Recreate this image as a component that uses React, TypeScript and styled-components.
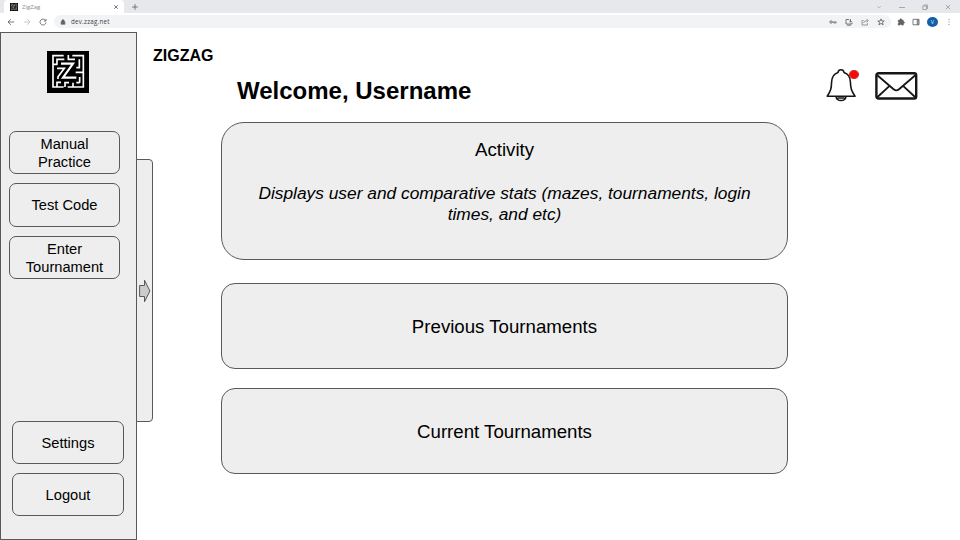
import React from "react";
import styled, { createGlobalStyle } from "styled-components";

const Global = createGlobalStyle`
  * { box-sizing: border-box; }
  body { margin: 0; background: #fff; color: #000; font-family: "Liberation Sans", Arial, sans-serif; overflow: hidden; }
  svg { display: block; flex: none; }
`;

const Page = styled.div`
  width: 960px;
  height: 540px;
  display: flex;
  flex-direction: column;
`;

const TabStrip = styled.div`
  height: 13px;
  flex: none;
  display: flex;
  align-items: flex-end;
  justify-content: space-between;
  background: #e7e8ec;
`;

const TabGroup = styled.div`
  display: flex;
  align-items: center;
  height: 13px;
`;

const Tab = styled.div`
  display: flex;
  align-items: center;
  width: 120px;
  height: 13px;
  margin-left: 4px;
  padding: 0 4px 0 6px;
  background: #fff;
  border-radius: 4px 4px 0 0;
`;

const TabTitle = styled.span`
  flex: 1;
  margin-left: 4px;
  font: 6px/8px "Open Sans", sans-serif;
  color: #85888c;
`;

const NewTab = styled.div`
  margin-left: 7px;
`;

const WindowControls = styled.div`
  display: flex;
  align-items: center;
  height: 12px;
  gap: 15px;
  padding-right: 8px;
`;

const Toolbar = styled.div`
  height: 19px;
  flex: none;
  display: flex;
  padding: 2px 7px 4px;
  align-items: center;
  background: #fff;
`;

const NavButtons = styled.div`
  display: flex;
  gap: 8px;
  width: 47px;
`;

const AddressBar = styled.div`
  flex: 1;
  height: 13px;
  display: flex;
  align-items: center;
  padding: 0 6px;
  border-radius: 7px;
  background: #f1f3f4;
`;

const Url = styled.span`
  flex: 1;
  margin-left: 5px;
  font: 6.2px/10px "Open Sans", sans-serif;
  letter-spacing: 0.25px;
  color: #3d4043;
`;

const ActionIcons = styled.div`
  display: flex;
  align-items: center;
  gap: 8px;
`;

const Extensions = styled(ActionIcons)`
  margin-left: 6px;
  gap: 7px;
`;

const Avatar = styled.span`
  width: 11px;
  height: 10px;
  border-radius: 50%;
  background: #1260a8;
  color: #dbe8f5;
  font-size: 5px;
  line-height: 10px;
  text-align: center;
`;

const Body = styled.div`
  flex: 1;
  display: flex;
  min-height: 0;
`;

const Sidebar = styled.nav`
  width: 137px;
  flex: none;
  display: flex;
  flex-direction: column;
  align-items: flex-start;
  padding: 18px 0 23px 8px;
  background: #eee;
  border: 1px solid #595959;
`;

const LogoSlot = styled.div`
  margin: 0 0 38px 38px;
`;

const ButtonGroup = styled.div<{ $bottom?: boolean }>`
  display: flex;
  flex-direction: column;
  gap: 9px;
  margin-top: ${(p) => (p.$bottom ? "auto" : "0")};
  margin-left: ${(p) => (p.$bottom ? "3px" : "0")};
`;

const SideButton = styled.button<{ $wide?: boolean; $tall?: boolean }>`
  width: ${(p) => (p.$wide ? 112 : 111)}px;
  height: ${(p) => (p.$tall ? 44 : 43)}px;
  padding: 0 10px;
  border: 1px solid #595959;
  border-radius: 7px;
  background: #eee;
  color: #000;
  font: 14.67px/18px "Liberation Sans", Arial, sans-serif;
`;

const Drawer = styled.div`
  width: 17px;
  height: 263px;
  flex: none;
  margin: 127px 0 0 -1px;
  display: flex;
  align-items: center;
  padding-left: 2px;
  border: 1px solid #595959;
  border-radius: 0 4px 4px 0;
  background: #eee;
`;

const Main = styled.main`
  flex: 1;
  display: flex;
  flex-direction: column;
  padding-top: 14px;
`;

const Brand = styled.div`
  height: 20px;
  font: bold 16px/20px "Liberation Sans", Arial, sans-serif;
`;

const Header = styled.header`
  display: flex;
  align-items: flex-start;
  height: 56px;
  padding-left: 84px;
`;

const Title = styled.h1`
  flex: 1;
  margin: 11px 0 0;
  font: bold 24px/28px "Liberation Sans", Arial, sans-serif;
`;

const BellButton = styled.div`
  position: relative;
  margin: 2px 17px 0 0;
`;

const Badge = styled.span`
  position: absolute;
  top: 2px;
  right: -1px;
  width: 10px;
  height: 9px;
  border-radius: 50%;
  background: #fb0707;
  border: 1px solid #c43030;
`;

const MailButton = styled.div`
  margin: 6px 42px 0 0;
`;

const Cards = styled.div`
  width: 567px;
  margin-left: 68px;
  display: flex;
  flex-direction: column;
`;

const Card = styled.section<{ $height: number; $radius: number; $gap: number }>`
  height: ${(p) => p.$height}px;
  margin-bottom: ${(p) => p.$gap}px;
  border: 1px solid #595959;
  border-radius: ${(p) => p.$radius}px;
  background: #eee;
  display: flex;
  flex-direction: column;
  align-items: center;
  justify-content: center;
  text-align: center;
`;

const CardTitle = styled.h2<{ $lowered?: boolean }>`
  margin: 0;
  padding-top: ${(p) => (p.$lowered ? 2 : 0)}px;
  font: 18.67px/22px "Liberation Sans", Arial, sans-serif;
`;

const CardText = styled.p`
  margin: 22px 0 19px;
  width: 500px;
  font: italic 17.33px/21px "Liberation Sans", Arial, sans-serif;
`;

const MazeLogo = ({ size }: { size: number }) => (
  <svg width={size} height={size} viewBox="0 0 126 126">
    <rect width="126" height="126" fill="#000" />
    <g fill="none" stroke="#fff" strokeWidth="5">
      <path d="M50 14H18V108H50" />
      <path d="M62 108H109V14H76" />
      <path d="M64 12V25H84M97 25V50H88" />
      <path d="M30 38V25H52M18 40H32" />
      <path d="M30 108V94H42M54 108V95H66M78 108V95" />
      <path d="M98 95V78M109 64H86M98 95H88" />
      <path d="M42 38H78L48 80H88" strokeWidth="6.5" />
      <path d="M30 52H52L33 77V84" />
    </g>
  </svg>
);

const Bell = () => (
  <svg width="32" height="34" viewBox="0 0 32 34" fill="none" stroke="#161616" strokeWidth="1.6" strokeLinejoin="round">
    <path d="M12 4.5C12.5 .8 17.5 .8 18 4.5C22.8 6 24.3 9.5 24.4 14C24.6 20.5 25.4 23 29 28.3H1.2C4.8 23 5.4 20.5 5.6 14C5.8 9.5 7.2 6 12 4.5Z" />
    <path d="M10 28.5C10.7 33.9 19.3 33.9 20 28.5M11.5 30H18.5" />
  </svg>
);

const Envelope = () => (
  <svg width="43" height="28" viewBox="0 0 43 28" fill="none" stroke="#161616" strokeWidth="2.4" strokeLinejoin="round">
    <rect x="1.4" y="1.3" width="39.8" height="25.2" rx="2" />
    <path d="M2 3L18.6 17.2Q21.3 19.5 24 17.2L40.6 3M2 25.5L14.8 13.7M40.6 25.5L27.8 13.7" strokeWidth="1.8" />
  </svg>
);

const Arrow = () => (
  <svg width="12" height="24" viewBox="0 0 12 24">
    <path d="M.6 6.5H5.5V1.2L10.9 12L5.5 22.8V17.5H.6Z" fill="#ccc" stroke="#595959" />
  </svg>
);

const Glyph = ({ d, size = 8, color = "#5f6368", fill = "none" }: { d: string; size?: number; color?: string; fill?: string }) => (
  <svg width={size} height={size} viewBox="0 0 8 8" fill={fill} stroke={color} strokeWidth=".85">
    <path d={d} />
  </svg>
);

export default function App() {
  return (
    <>
      <Global />
      <Page>
        <TabStrip>
          <TabGroup>
            <Tab>
              <MazeLogo size={8} />
              <TabTitle>ZigZag</TabTitle>
              <Glyph size={8} d="M2.2 2.2L5.8 5.8M5.8 2.2L2.2 5.8" />
            </Tab>
            <NewTab>
              <Glyph color="#606368" d="M4 1.2V6.8M1.2 4H6.8" />
            </NewTab>
          </TabGroup>
          <WindowControls>
            <Glyph color="#b5b6bb" d="M2 3L4 5L6 3" />
            <Glyph color="#999ba0" d="M1 4.5H7" />
            <Glyph color="#999ba0" d="M1.8 3H5.5V6.5H1.8ZM3 3V2H6.5V5.5H5.5" />
            <Glyph color="#999ba0" d="M1.8 2L6.2 6.2M6.2 2L1.8 6.2" />
          </WindowControls>
        </TabStrip>
        <Toolbar>
          <NavButtons>
            <Glyph d="M7.2 4H1M3.8 1.2L1 4L3.8 6.8" />
            <Glyph color="#bfc1c4" d="M.8 4H7M4.2 1.2L7 4L4.2 6.8" />
            <Glyph d="M6.6 2.5A3 3 0 1 0 7 4.5M7 1V3H4.8" />
          </NavButtons>
          <AddressBar>
            <Glyph size={6} fill="#5f6368" d="M1.5 3.5H6.5V7H1.5ZM2.5 3.5V2.2C2.5 .5 5.5 .5 5.5 2.2V3.5" />
            <Url>dev.zzag.net</Url>
            <ActionIcons>
              <Glyph d="M3.2 4A1.2 1.2 0 1 0 .8 4A1.2 1.2 0 1 0 3.2 4H7.5M5.2 4V5.5M6.8 4V5.5" />
              <Glyph d="M4 1.5H1V6H7V4.5M2 7.2H6M5.5 1V4M4.3 3L5.5 4.2L6.7 3" />
              <Glyph color="#85888c" d="M2.5 2.5H1V7H6.5V5.2M2.5 5C3 3.3 4.3 2.7 6.8 2.7M5.5 1L7.2 2.7L5.5 4.4" />
              <Glyph d="M4 .9L4.9 3H7.2L5.4 4.4L6.1 6.8L4 5.4L1.9 6.8L2.6 4.4L.8 3H3.1Z" />
            </ActionIcons>
          </AddressBar>
          <Extensions>
            <Glyph fill="#5f6368" d="M1.3 2.3H3V1.5C3 .6 4.7 .6 4.7 1.5V2.3H6.2V4H6.8C7.6 4 7.6 5.3 6.8 5.3H6.2V7H4.7C4.7 5.6 3 5.6 3 7H1.3V5.3C2.6 5.3 2.6 3.8 1.3 3.8Z" />
            <Glyph d="M1 1.3H7V6.8H1ZM5.2 1.3V6.8M6.1 1.3V6.8" />
            <Avatar>V</Avatar>
            <Glyph d="M4 1.2V2.1M4 3.6V4.5M4 6V6.9" />
          </Extensions>
        </Toolbar>
        <Body>
          <Sidebar>
            <LogoSlot>
              <MazeLogo size={42} />
            </LogoSlot>
            <ButtonGroup>
              <SideButton>Manual Practice</SideButton>
              <SideButton $tall>Test Code</SideButton>
              <SideButton>Enter Tournament</SideButton>
            </ButtonGroup>
            <ButtonGroup $bottom>
              <SideButton $wide>Settings</SideButton>
              <SideButton $wide>Logout</SideButton>
            </ButtonGroup>
          </Sidebar>
          <Drawer>
            <Arrow />
          </Drawer>
          <Main>
            <Brand>ZIGZAG</Brand>
            <Header>
              <Title>Welcome, Username</Title>
              <BellButton>
                <Bell />
                <Badge />
              </BellButton>
              <MailButton>
                <Envelope />
              </MailButton>
            </Header>
            <Cards>
              <Card $height={138} $radius={23} $gap={23}>
                <CardTitle>Activity</CardTitle>
                <CardText>Displays user and comparative stats (mazes, tournaments, login times, and etc)</CardText>
              </Card>
              <Card $height={86} $radius={14} $gap={19}>
                <CardTitle $lowered>Previous Tournaments</CardTitle>
              </Card>
              <Card $height={86} $radius={14} $gap={0}>
                <CardTitle $lowered>Current Tournaments</CardTitle>
              </Card>
            </Cards>
          </Main>
        </Body>
      </Page>
    </>
  );
}
